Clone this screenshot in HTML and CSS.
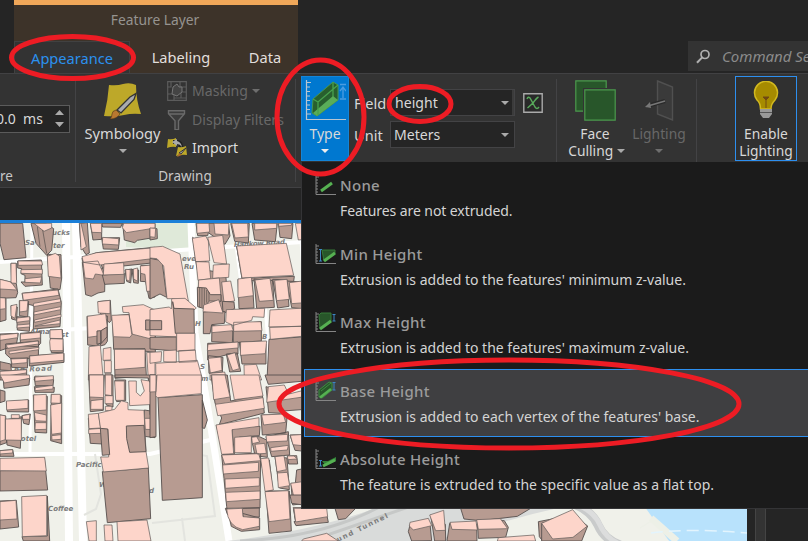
FILE: index.html
```html
<!DOCTYPE html>
<html lang="en">
<head>
<meta charset="utf-8">
<title>Feature Layer</title>
<link rel="stylesheet" href="styles.css">
</head>
<body>
<div class="app">
  <header class="titlebar">
    <div class="context">
      <div class="context-title"><span class="t-context">Feature Layer</span></div>
      <nav class="tabs">
        <a class="tab active">Appearance</a>
        <a class="tab labeling">Labeling</a>
        <a class="tab data">Data</a>
      </nav>
    </div>
    <div class="search">
      <svg width="15" height="15" viewBox="0 0 15 15"><circle cx="9" cy="5.5" r="4" fill="none" stroke="#b0b0b0" stroke-width="1.7"/><path d="M6.2 8.4 1 13.8" stroke="#b0b0b0" stroke-width="2"/></svg>
      <span>Command Search</span>
    </div>
  </header>

  <section class="ribbon">
    <div class="group g-fps">
      <div class="spin"><span>0.0&nbsp; ms</span>
        <svg width="9" height="18" viewBox="0 0 9 18"><path d="M0 5 4.5 0 9 5zM0 12h9l-4.500 5z" fill="#aaa"/></svg>
      </div>
      <div class="caption">re</div>
    </div>
    <div class="group g-draw">
      <div class="draw-body">
        <div class="big symbology">
          <svg width="40" height="38" viewBox="0 0 40 38"><path d="M6 3q8 1 14-1 7-2 13 1 0 15 5 29-9-1-17 1T1 34Q5 18 6 3z" fill="#bda829"/><path d="m33 11.500-2 6-13 13.500-4-3 13-13z" fill="#a9aaad" stroke="#333" stroke-width="1.300"/><path d="m13 28 4 4q-3 5-10 5 2-2 2-5t4-4z" fill="#b97830" stroke="#4b3516" stroke-width=".6"/></svg>
          <span class="t-symbology">Symbology</span>
          <i class="caret"></i>
        </div>
        <div class="small-list">
          <div class="row off">
            <svg width="20" height="20" viewBox="0 0 20 20"><path d="M.7.700h18.600v18.600H.7zM1 13h6v6M7 17h12M1 6h3V1M13 1v5h6M14 17v-6h5" fill="none" stroke="#5c5c5c" stroke-width="1.200"/><path d="m6 6 4-3 2 3 3 0 0 5-5 4-5-2z" fill="#444" stroke="#777"/></svg>
            <span class="t-mask">Masking</span><i class="caret"></i>
          </div>
          <div class="row off">
            <svg width="20" height="20" viewBox="0 0 20 20"><path d="M1.500.700h16v3l-6 7v9H8v-9l-6.500-7zM2 4h15" fill="#3c3c3c" stroke="#6a6a6a" stroke-width="1.400"/></svg>
            <span class="t-filter">Display Filters</span>
          </div>
          <div class="row">
            <svg width="20" height="20" viewBox="0 0 20 20"><path d="M1 1q4 1 8-1v9q-4-1-9 1zM11 9q4 1 8-1l1 9q-5-1-11 1z" fill="#bda829"/><path d="M6 4h5q3 1 3 5" fill="none" stroke="#222" stroke-width="4"/><path d="m5 4 5-3v2q4 1 5 6-2-3-5-3v2z" fill="#aaa"/><path d="m19 10-5 6-2-1z" fill="#bbb" stroke="#333"/><path d="m12 15 3 2-5 2z" fill="#a76b2a"/></svg>
            <span class="t-import">Import</span>
          </div>
        </div>
      </div>
      <div class="caption"><span class="t-drawing">Drawing</span></div>
    </div>
    <div class="group g-extr">
      <div class="big type">
        <svg width="41" height="41" viewBox="0 0 41 41"><path d="M1.500 0v39.500H41" fill="none" stroke="#b7c5d1" stroke-width="1.200"/><path d="M1 2.500h5M1 7h4M1 11.500h4M1 16h4M1 20.500h4M1 25h4M1 29.500h4M1 34h5" stroke="#b7c5d1"/><path d="m8 19 20-17 5 3v15L12 36l-5-3z" fill="#285f2e" stroke="#48964c"/><path d="m8 33 20-17 5 4-21 16z" fill="#59ad58"/><path d="m8 19 5 3L33 5M13 22v13M28 17V2" fill="none" stroke="#48a24e" stroke-width="1.300"/><path d="M35 4.500h6M35 19h6M38 18V7m-3 4 3-4 3 4" fill="none" stroke="#4b9ce0" stroke-width="1.300"/></svg>
        <span class="t-type">Type</span><i class="caret"></i>
      </div>
      <div class="fields">
        <label>Field</label><div class="combo split"><span class="t-height">height</span><i class="caret"></i></div>
        <svg class="expr" width="20" height="20" viewBox="0 0 20 20"><path d="M.8.800h18.400v18.400H.8z" fill="#292929" stroke="#aaa" stroke-width="1.400"/><path d="M4 6q1-3 3-1l5 9q2 3 4 0M15.500 4q-2 1-5.500 6l-5.500 5" fill="none" stroke="#58a95b" stroke-width="1.400"/></svg>
        <label>Unit</label><div class="combo"><span class="t-meters">Meters</span><i class="caret"></i></div>
      </div>
    </div>
    <div class="group g-face">
      <div class="big face">
        <svg width="41" height="41" viewBox="0 0 41 41"><g fill="#28562a" stroke="#4b994d" stroke-width="1.200"><path d="M.8.800h30.400v30.400H.8z"/><path d="M9.500 9.500h31v31h-31z" stroke="#333" stroke-width="3"/><path d="M9.800 9.800h30.400v30.400H9.800z"/></g></svg>
        <span>Face</span><span class="t-culling">Culling <i class="caret"></i></span>
      </div>
      <div class="big lighting off">
        <svg width="30" height="41" viewBox="0 0 30 41"><path d="m13.500 1 15 6v33l-15-6z" fill="#3a3a3a" stroke="#505050" stroke-width="1.400"/><path d="M21 21 3 26" stroke="#292929" stroke-width="4"/><path d="M21 21 4 26" stroke="#777" stroke-width="1.600"/><path d="m1 27 5-5 1 6z" fill="#777"/></svg>
        <span class="t-light">Lighting</span><i class="caret"></i>
      </div>
    </div>
    <div class="group g-enable">
      <div class="big enable">
        <svg width="26" height="38" viewBox="0 0 26 38"><path d="M7.500 28q0-6-3.500-9A11.500 11.500 0 1 1 22 19q-4 4-4 9z" fill="#a68b00" stroke="#d2b91f" stroke-width="1.500"/><path d="M10 16h6l-3 3zM13 18v9" fill="#704813" stroke="#704813"/><path d="M7 28h12v5l-3 4h-6l-3-4z" fill="#999"/><path d="M7 31.500h12" stroke="#555"/></svg>
        <span>Enable</span><span>Lighting</span>
      </div>
    </div>
  </section>

  <div class="gap"></div>

  <main class="view">
  <svg class="map" width="747" height="318" viewBox="0 223 747 318">
    <rect y="223" width="747" height="318" fill="#f0f1ea"/>
    <path d="M126 223h64l-8 26-56-2zM157 223h32v28h-32z" fill="#dfe9d9"/>
    <path d="M640 500h107v41h-78z" fill="#b8e2fc"/><path d="m625 508 44 33h-50z" fill="#f0f1ea"/>
    <path d="m651 518 26 23" stroke="#edf0e7" stroke-width="7"/><path d="m640 528 13-8" stroke="#edf0e7"/><path d="M651 533q40-5 96 0" fill="none" stroke="#e3f4fd" stroke-width="1.500" stroke-dasharray="12 6"/>
    <g fill="none" stroke="#fff">
      <path d="m66 223 3 318M76 223l7 318" stroke-width="8"/>
      <path d="m191 223 4 110 12 70 22 138" stroke-width="7"/>
      <path d="M0 454h150l60-14M0 334l92-6M0 262l302-20" stroke-width="4"/>
      <path d="m233 223 12 90M300 223l3 50M265 300l5 80M32 223l-2 230" stroke-width="3"/>
      <path d="m84 515 12-6 5-15-6-40M185 452l22 4 8 60-63 7M182 518l3 23" stroke="#e3e4df" stroke-width="2"/>
    </g>
    <path d="M227 541q90-10 160-37h190q-70 14-130 37z" fill="#d9dbda"/><path d="M240 541q90-4 150-40M310 541l110-38M440 541l90-34" fill="none" stroke="#c6c8c7" stroke-width="3"/>
    <path d="M572 503q20 8 26 22t22 20" fill="none" stroke="#c9cbcb" stroke-width="9"/><path d="M574 503q20 8 26 22t22 20" fill="none" stroke="#dcdddd" stroke-width="5"/>
    <g class="labels">
      <text x="52" y="235">ucks</text><text x="25" y="245">Sa</text><text x="53" y="248">ter</text><text x="30" y="334">Alma</text><text x="61" y="337">st</text>
      <text x="14" y="372" textLength="38" transform="rotate(-2 14 372)">ng Road</text><text x="15" y="441">Hotel</text><text x="76" y="467">Pacific</text>
      <text x="48" y="511">Coffee</text><text x="99" y="487">W</text><text x="149" y="493">d</text><text x="182" y="261">eve</text><text x="184" y="269">Ru</text>
      <text x="234" y="247" textLength="51" transform="rotate(-3 234 247)">Hankow Road</text><text x="195" y="326">H</text><text x="262" y="339">B</text><text x="200" y="369">S</text><text x="201" y="381">m</text>
      <text class="road" x="338" y="542" textLength="56" transform="rotate(-26 338 542)">und Tunnel</text>
    </g>

    <g transform="translate(0 210) scale(.33333)">
      <path class="s" d="M0 40h68l10 103-66 6L0 100zM93 40l15 60 32 36 15-15 6-65-25-16zM238 40l5 70 15 24 10-5-6-91zM271 40l8 50 26-2V40zM305 40h62l-5 12-54-1zM305 84l5 33 45 1 4-35zM368 40l5 50 31 8 8-7 53-9V40zM142 133l9 101 29 5 5-35-2-70z"/>
      <path class="r" d="M102 40l30 24 23-10V40zM243 40l16 70-16 10-4-80zM271 40l5 27 29 1V40zM308 82l48 4v19l-49-3zM371 40h94v14l-86 14-12-15zM142 139l24-9 12 8 5 66-38-5z"/>
      <path class="d" d="M112 50l8 60M128 60l12 70"/>
      <path class="s" d="M246 144l44-16 175-16v46l-162 17-55-20zM247 157l10 97 17 5 20-10 20-4 1-54-15-34z"/>
      <path class="r" d="M246 140l44-12 175-15v32l-165 20-50-8zM249 157l45-4 18 43-26-4-6 15-25-3z"/>
      <path class="s" d="M307 195l7 28 59-3V190zM375 180l5 34 12 5 4-42zM396 178l5 40 14 2 1-40zM423 166l-2 48 16 1 10 50 18-4v-95z"/>
      <path class="r" d="M312 162l59-4 1 35-62 2zM377 178l14 1-2 35-10-5zM400 177l13-3v40l-12-7zM421 168l44-4v79l-25 1-5-51-13-3z"/>
      <path class="s" d="M33 160l2 55h14v-55zM53 153v21l12 2-2 15 12 5v20l-12 0 12 13 52-4-3-75zM0 208l49 13 4 27-5 15-48 2zM0 263l18 2v65l-18 5zM33 287l2 40 15 4 2-40zM58 272v45l25 4 3-47zM66 250l6 30 30 7-2 70 80-7 4-73-10-40zM50 320l2 40 36 4 2-42zM0 372v50l49-17 6-35zM61 370v37l51 3 10-10v-35zM150 360l4 68 36-1-3-68zM17 402v30l18 16 80-5 1-50zM0 455l32 7 2 20-34-2zM33 445l2 27 47 2 2-30zM88 438v30l104-11V430zM0 484l80-5v31H0z"/>
      <path class="r" d="M33 160h15l2 60-17-1zM54 153h71l3 12-73 1zM63 179l64-1v14l-64-2zM75 206l50-5-4 18-46-2zM0 208l33 8 18 24-51-3zM0 263l16 1 1 32-17 2zM33 287l18-4-6 42-12-7zM59 272h25l-3 31-22 3zM67 250l107-10 3 16-107 15zM101 280l80-14 1 10-82 14zM102 306l80-16v9l-80 16zM103 330l80-17v8l-80 16zM105 348l75-18v11l-75 8zM51 324l38-4v12l-39 5zM52 345l37-3v9l-38 3zM0 375l53-5v13l-53 8zM61 372l60-5v17l-60 6zM150 360l36-2 2 28-38-1zM149 395l2-9 38 1v35h-38zM18 405l96-12 2 9-93 13zM27 424l90-12-1 7-88 13zM33 447l48-2v13l-45 4zM89 438l102-9v22l-101 9zM0 484l80-5-1 10-79 12zM102 510l3-12 55 1v11z"/>
      <path class="s" d="M295 275l3 32 30 31 6-7-3-60zM261 319l2 86 29 3 10-9-1 9 14-4 7-10V318zM337 318l4 100 53 1 72 8V305z"/>
      <path class="r" d="M293 275l37-4v40l-35-2zM262 319l55-8 5 42-17 9-4 15-37 5zM335 316l52-2 10 58-7 10-50-2zM367 290l63-6 35 16v90l-70-18-8-64-18-1z"/>
      <path class="s" d="M437 330h28v30h-28zM291 363l11-1 1 37-12 4zM303 362l18-11v30l-18 20z"/>
      <path class="r" d="M267 410l34-4 9 104h-45zM310 416l23-4v38l-24 1zM313 452h21v36h-21zM315 490h18l2 20h-18z"/>
      <path class="s" d="M343 417l92-1 4 82-94 7z"/><path class="r" d="M343 418h92v54l-91 7zM440 427l25 2v80h-20z"/>
    </g>
    <g transform="translate(150 210) scale(.33333)">
      <path class="s" d="M0 55l21 1 1 30-22 4zM0 145l36 7 14 110-20-10-30 15zM128 82l10 75 10 53-3 50 20 45 70-5-8-110-50-8-26-77zM138 40l5 37h30l2-9 50 35 15-25-5-38zM242 40l12 54 41 5 3-59zM306 40l8 50 62 5 6-55zM385 40l5 42 35 4 4-46zM260 108l18 97 155-6-2 15-75 7-80-15z"/>
      <path class="r" d="M0 54l17 1-2 27-15-2zM0 112l38-3 52 23 25 141-50-7-14 0-10-98-20-22-21-2zM127 85l40-7 8 15 4 60-42 2zM173 82l45-6 12 86-38-4zM140 40h37l2 26-38 4zM192 40h45l-2 35-40-3zM245 40h48l2 41-40 3zM314 40h66v15l-66 5zM386 40h40l-2 6-38 3zM260 108l149-8 22 96-155 8zM436 40h29v48l-20 2zM138 155l39 1 5 50-38 5zM190 165l48-3-2 40-48 3z"/>
      <path class="r" d="M146 210l62-6 6 70-55 15-15-35zM215 216l27-3 12 60-32 4z"/>
      <path class="s" d="M264 208l3 88 45-2-5-80zM312 207l8 88 53-3-5-80zM368 208l15 86 34-5-6-80zM410 213l15 80 40 4v-80zM217 274l35 2 2 20-35 14zM142 232l27 2 12 20h32v20l-35-1-18 22-17-5z"/>
      <path class="r" d="M264 207l40-5 6 55-46 6zM315 210l45-5 10 66-42 3zM374 211l37-3 7 60-38 4zM418 218l47-6v66l-40 3z"/>
      <path class="d" d="M149 234v58M156 234v58M163 235v49M170 240v38M177 246v27"/>
      <path class="r" d="M0 299l58-8 6 6 1-31 40-1 34 29-10 8-55-3 7 62v20l-81-4z"/>
      <path class="s" d="M0 332h35v27H0zM68 275l8 95h57l-1-73-60-2zM0 382l79-1v42L0 417z"/>
      <path class="r" d="M80 370h55v50l-55 4zM0 427l35-2-2 30-33 5zM41 422l38-2v37l-38-2zM86 422l50-2 3 35-52 2zM17 460l125-9 16 59H18z"/>
      <path class="s" d="M160 306l30-3 35 2-2 35-38 4-5 27h-20zM186 345l-1 50 62 3 2-35zM249 344l1 54 84-5v-58zM173 400v50l58-16 33-2v-35zM268 397l8 65h72v-60zM175 437l2 53 40-3 2-45zM229 432l10 54 33-2-10-55z"/>
      <path class="r" d="M161 285l45-16 13 40-60-4zM229 299l115-4-2 27-34-2-3 11-56 15-22-10zM186 348l58-4 6 18-64 6zM251 337l82-2 3 27-85 2zM174 403l90-7v18l-92 8zM272 396l78-3-4 38-75 5zM175 445l38-4 3 40-35 8zM231 435l24-7 13 48-20 6zM180 490l44-4 6 24h-50zM282 465l37-2 16 47h-52z"/>
      <path class="s" d="M357 388l108-8v130H351z"/><path class="r" d="M360 300l105-6v55l-108 2zM359 352l106-4v30l-104 10z"/>
    </g>
    <g transform="translate(0 375) scale(.33333)">
      <path class="s" d="M10 15l79-5-2 20-75 10zM0 45l15 4v29l-15 5zM19 80l3 30 64 1V75zM0 120l17 3 3 80-20 7zM16 135l5 75 40 10 4-95zM66 122l5 23 16 4 4-32zM103 6l3 26h53l2-18zM103 35l2 17h57l1-15zM100 60l5 112 35 2 2-110zM154 58l-2 139 33 9V62zM0 227l38-3 4 20H0zM0 287l134-1-1-38 10 97-143 3zM0 378l49-2 7 80-56 6zM66 485l76-2v-120l7 135H70z"/>
      <path class="r" d="M0 0h88l1 10-76 14zM105 6l55-4v12l-55 5zM106 38l53-7v11l-54 5zM19 78l65-4v26l-64 5zM0 120l16 2v72l-16 5zM16 132l48-1v65l-48-1zM34 119h24v11H34zM67 122l22-4v15H68zM101 60l38-2v47l-38 3zM103 112l36 8v19l-33-2zM106 143h33v20l-34 1zM154 58h27v27l-28-1zM152 90l33-6-1 90-29 4zM155 182l28-3v14l-27 2zM0 227l38-3v10l-38 3zM0 250l134-3 5 41-139-1zM0 380l48-4 3 56-51 3zM65 365l75-4v121l-73 3z"/>
      <path class="s" d="M266 0l5 110 39-4V0zM314 0l5 90 20 6V0zM345 0v7l100 2 5 110h15V0zM345 15l5 65 27-3V15zM265 130l6 75 37 2v-82zM433 105l32 5v78l-32-4z"/>
      <path class="r" d="M268 0h43v68l-42-2zM316 0h19v62l-20-3zM344 18h29v58h-26zM386 18h23v34l12 11 12-15-10-34 25 4 16 27v43l-75 4zM273 77l36-4v30h-37zM265 118l30-3 7 44-35 2zM266 163l38-3v15l-38 1zM315 62h24v24h-24zM316 94h20v13h-20z"/>
      <path class="s" d="M307 290l138-11 7 152-130 12z"/>
      <path class="r" d="M295 115l49-12 20-26 20 6v21l48 2 6 123 8 50-136 12-8-45h24l-2-83h-22z"/>
      <path class="s" d="M301 160l22 2 6 77-22 2zM379 153l53-2 6 79-49 2-9-41z"/>
      <path class="r" d="M259 440l30-3v61h-22zM312 450h24l3 48h-24zM351 440l90-5 12 63H354zM434 130h31v34l-29-1z"/>
    </g>
    <g transform="translate(150 375) scale(.33333)">
      <path class="s" d="M0 0h18v185l-18 3zM24 68l133-9v309l-120 8zM157 75l15 60-8 25-7-1zM183 0l12 84 20 45-7 20 135-35-6-55-95 19L232 0zM345 0l10 28 110-10V0zM348 35l8 78 35 2 9-7 65-5V70zM199 150l20 88 34-4-8-78 85-2-2 28-60 4-15 50zM333 120l4 60 70-6 5-55zM303 185l12 57 37 5-2-52-22-10zM348 185l17 60 54-5-4-70zM420 180l15 46 30 3v-50zM215 240l7 70 8 85 3 25-7-20 104-1 2-165zM331 253l23 95 14-3-10-90zM375 245l13 94 30 5-7-95zM412 243l4 24h27l-3-25zM440 285l-4 40 29 5v-50zM423 325l5 65 37-5v-60zM348 348l9 127 67-7-6-120zM430 398l7 45 28 5v-50zM275 400l5 28 48-2v-28zM232 403l12 51 30 15 55-5v-35z"/>
      <path class="r" d="M0 0h18v50l-18 1zM21 0h133v56l-132 12-5-6zM185 0h40l15 66-49 8zM240 0h87l12 63-86 11zM196 88l143-20 4 32-140 22zM198 150l129-22v26l-81 10 5 72-36 2zM355 35l48-5 7 15-5 15 60-15v20l-115 17zM335 120l65-3 7 25-66 8zM348 182l65-4-1 20-62 3zM362 218l53-7-3 14-49 4zM254 187l50-4v50h-50zM305 187l15-2 9 16-22 5zM315 208l29-3 5 30-28 2zM215 240l111-4 6 21-108 10zM218 270l108-8-1 27-105 8zM225 312l103-4v25l-102 7zM227 352l103-4v25l-101 7zM231 402l46-2 2 25 49 4v25l-50 10q-45-10-48-62zM332 251l24-2 14 96-25 4zM375 245l27-3 7 42-28 6zM382 294l30-2 7 40-34 6zM345 350l70-3 5 85-63 8zM422 325l43-6v50l-34-5zM430 397l35 3v40l-28-4zM412 243h20l10 9-28 2zM421 181l44-3v35l-36-4z"/>
    </g>
    <g transform="translate(290 495) scale(.33333)">
      <path class="s" d="M0 0h40v30l-35-5zM12 80l6 12 97-10-4-20zM135 40l10 34 22-3 30-31zM360 90l-5 20 10 28 60-1-5-50zM422 60l12 78h33l-1-50zM479 85l-8 53h90l-1-50zM562 75l3 55 82-3 8-30-12-20zM512 40l10 32 50 5 110-13 40-24zM745 80l3 45 10 13h90V60z"/>
      <path class="r" d="M12 40h98l3 25-96 16zM40 132l70-17 35 23H35zM360 82l55-12 10 22-55 13-12-12zM419 60l42-14 5 60-29 1zM480 82l78-4 4 27-76-2zM560 74l71-3 22 30-88 2zM625 128l107-8 5 18H622z"/>
    </g>
    <g transform="translate(540 340) scale(.33333)"><path class="s" d="M5 550v53h120l18-45-40-30z"/><path class="r" d="M5 550l93-41 43 50-42 33-61 5z"/></g>
  </svg>
  <aside class="dock"></aside>
  </main>

  <div class="menu">
    <div class="item">
      <svg width="21" height="21" viewBox="0 0 21 21"><path class="axis" d="M1 0v19.500h20M1 2h3M1 5h2M1 8h2M1 11h2M1 14h2M1 17h2"/><path d="m6 16 11-8" stroke="#56b152" stroke-width="3"/></svg>
      <div><h3>None</h3><p class="p1">Features are not extruded.</p></div>
    </div>
    <div class="item">
      <svg width="21" height="21" viewBox="0 0 21 21"><path class="axis" d="M1 0v19.500h20M1 2h3M1 5h2M1 8h2M1 11h2M1 14h2M1 17h2"/><path d="M7 6h13v4L9 17z" fill="#28562a" stroke="#367a39"/><path d="m9 17 11-8" stroke="#56b152" stroke-width="3"/><path class="dim" d="M4 5.500h3M4 17h3M5.500 6v11"/></svg>
      <div><h3>Min Height</h3><p class="p2">Extrusion is added to the features' minimum z-value.</p></div>
    </div>
    <div class="item">
      <svg width="21" height="21" viewBox="0 0 21 21"><path class="axis" d="M1 0v19.500h20M1 2h3M1 5h2M1 8h2M1 11h2M1 14h2M1 17h2"/><path d="m4 3 2-2h10v9L5 17z" fill="#28562a" stroke="#367a39"/><path d="m5 17 11-8" stroke="#56b152" stroke-width="3"/><path class="dim" d="M17.500 2.500h3M17.500 9h3M19 3v6"/></svg>
      <div><h3>Max Height</h3><p class="p3">Extrusion is added to the features' maximum z-value.</p></div>
    </div>
    <div class="item hot">
      <svg width="21" height="21" viewBox="0 0 21 21"><path class="axis" d="M1 0v19.500h20M1 2h3M1 5h2M1 8h2M1 11h2M1 14h2M1 17h2"/><path d="m4 9 10-8 3 1v7L7 17l-3-1z" fill="#28562a" stroke="#3f8c42"/><path d="m5 16.500 11-8.500" stroke="#56b152" stroke-width="2.500"/><path d="m6 10 10-8" stroke="#3f8c42"/><path class="dim" d="M17.500 1.500h3M17.500 9h3M19 2v7"/></svg>
      <div><h3>Base Height</h3><p class="p4">Extrusion is added to each vertex of the features' base.</p></div>
    </div>
    <div class="item">
      <svg width="21" height="21" viewBox="0 0 21 21"><path class="axis" d="M1 0v19.500h20M1 2h3M1 5h2M1 8h2M1 11h2M1 14h2M1 17h2"/><path d="M7 12h6l8-4v4l-10 5z" fill="#34843a"/><path d="m8 17 12-6" stroke="#56b152" stroke-width="3"/><path class="dim" d="M4 11.500h3M4 17h3M5.500 12v5"/></svg>
      <div><h3>Absolute Height</h3><p class="p5">The feature is extruded to the specific value as a flat top.</p></div>
    </div>
  </div>

  <svg class="marks" width="808" height="541" viewBox="0 0 808 541" fill="none" stroke="#ed1c24" stroke-width="5">
    <ellipse cx="72.500" cy="57.500" rx="61" ry="21"/>
    <ellipse cx="320.500" cy="117" rx="43.500" ry="57"/>
    <ellipse cx="420" cy="104" rx="31" ry="17.500"/>
    <ellipse cx="509" cy="404" rx="230" ry="44"/>
  </svg>
</div>
</body>
</html>
```

FILE: styles.css
```css
* { box-sizing: border-box; }
body { margin: 0; background: #252525; font: 14.600px/18px "Noto Sans", "Open Sans", sans-serif; color: #d8d8d8; }
.app { position: relative; width: 808px; height: 541px; overflow: hidden; display: grid; grid-template-rows: 73px 115px 32px 1fr; }
svg { display: block; flex: none; }
span, label, h3, p, .tab { white-space: nowrap; }
.caret { display: inline-block; flex: none; border: 4px solid transparent; border-top-color: #aaa; border-bottom: 0; }

.titlebar { display: flex; justify-content: space-between; align-items: flex-start; }
.context { margin-left: 14px; width: 284px; height: 73px; border-top: 5px solid #f0a759; background: #3d3329; }
.context-title { height: 36px; padding-top: 6px; padding-right: 2px; text-align: center; color: #969390; font-size: 13.800px; }
.tabs { display: flex; height: 32px; line-height: 33px; color: #e2dfdc; }
.tab { text-align: center; }
.active { width: 116px; background: #333; border: 1px solid #414141; border-bottom: 0; color: #2b91ee; }
.labeling { width: 102px; }
.data { width: 66px; }
.search { width: 120px; height: 30px; margin-top: 41px; padding-left: 8px; display: flex; align-items: center; gap: 11px; background: #333; color: #8b8b8b; font-style: italic; font-size: 15px; overflow: hidden; }

.ribbon { display: flex; background: #333; border-top: 1px solid #414143; border-bottom: 1px solid #414143; }
.group { position: relative; flex: none; }
.g-fps, .g-draw, .g-extr, .g-face { background: linear-gradient(#434345, #434345) right 5px / 1px 103px no-repeat; }
.g-fps { width: 76px; padding-top: 31px; }
.spin { width: 70px; height: 28px; border: 1px solid #5b5b5b; border-left: 0; background: #252525; display: flex; justify-content: space-between; align-items: center; padding-right: 5px; font-size: 14px; }
.spin span { margin-left: -4px; }
.caption { font-size: 13.500px; color: #c8c8c8; text-align: center; }
.g-draw .caption { padding-right: 2px; }
.g-fps .caption { text-align: left; margin-top: 34px; }
.g-draw { width: 220px; }
.draw-body { display: flex; height: 93px; }
.big { display: flex; flex-direction: column; align-items: center; }
.symbology { width: 93px; padding-top: 8px; }
.symbology .t-symbology { margin: 4px 0 7px; }
.small-list { flex: 1; padding: 3px 0 0; }
.symbology + .small-list { margin-left: -2px; }
.row { display: flex; align-items: center; height: 28.500px; gap: 5px; color: #dcdcdc; font-size: 14.100px; }
.row .caret { margin-left: -1px; }
.row.off { color: #686868; }
.off { color: #686868; }
.off .caret { border-top-color: #6e6e6e; }

.g-extr { width: 261px; display: flex; }
.type { width: 48px; height: 85px; margin: 2px 0 0 5px; background: #0078d0; border: 1px solid #1385d8; padding-top: 3px; }
.type .t-type { margin: 4px 0 6px; font-size: 14px; }
.type .caret { border-top-color: #eee; }
.fields { display: grid; grid-template: 27px 27px / 31px 125px 20px; column-gap: 5px; row-gap: 5px; padding: 15px 0 0 5px; align-content: start; align-items: center; }
.combo { height: 27px; border: 1px solid #434345; background: #252525; display: flex; align-items: center; justify-content: space-between; padding: 0 5px 0 3px; font-size: 14.100px; }
.split { box-shadow: inset -2px 0 #3b3b3b; }
.t-height { margin-left: 1px; }
.expr { margin-left: 3px; }

.g-face { width: 140px; display: flex; }
.face { width: 76px; padding-top: 6px; }
.face span:first-of-type { margin-top: 4px; }
.face span, .enable span, .t-light { line-height: 17px; font-size: 13.800px; }
.t-culling { margin-left: 3px; }
.face .caret { vertical-align: 3px; }
.lighting { width: 52px; padding-top: 6px; }
.lighting .t-light { margin: 4px 0 7px; }
.enable { margin: 2px 0 0 38px; width: 62px; height: 85px; border: 1px solid #2d8fef; padding-top: 4px; background: #303030; }
.enable span:first-of-type { margin-top: 6px; }

.gap { background: #252525; }
.view { border-top: 3px solid #1b7fd8; display: flex; }
.dock { flex: 1; background: linear-gradient(90deg, #252525 8px, #444 8px 9px, #333 9px 18px, #444 18px 19px, #252525 19px); }
.map .r { fill: #fdd5ca; stroke: #67605d; stroke-width: 2.200; }
.map .s { fill: #b79b91; stroke: #5a5351; stroke-width: 2.800; }
.map .d { fill: none; stroke: #514b49; stroke-width: 2; }
.labels { font: italic bold 7px "DejaVu Sans", sans-serif; fill: #7c7c7c; }
.labels .road { font-style: normal; }

.menu { position: absolute; left: 301px; top: 162px; width: 520px; height: 347px; background: #1b1b1b; border: 1px solid #343436; border-top: 0; padding: 1px 0 0 2px; }
.item { height: 68.500px; display: flex; gap: 4px; padding: 11px 0 0 10px; border: 1px solid transparent; }
.hot { background: #3f3f41; border-color: #2d8fef; }
.item h3 { margin: 1px 0 8px; font: 500 15px/18px "Noto Sans", sans-serif; color: #9b9b9b; letter-spacing: .3px; }
.item p { margin: 0; font-size: 14px; color: #d4d4d4; }
.item .p1 { letter-spacing: -.08px; }
.item .p5 { letter-spacing: .06px; }
.axis { fill: none; stroke: #858585; stroke-width: 1; }
.dim { fill: none; stroke: #3d86c4; stroke-width: 1; }
.marks { position: absolute; left: 0; top: 0; pointer-events: none; }
```
